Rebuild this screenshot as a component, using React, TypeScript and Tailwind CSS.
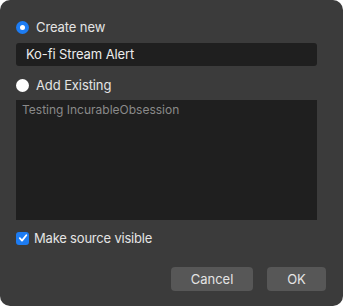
import React from "react";

export default function App() {
  const font = { fontFamily: "Inter, 'Noto Sans', sans-serif" };
  return (
    <div className="w-[343px] h-[306px] bg-white" style={font}>
      <div className="w-full h-full rounded-[10px] bg-[#3b3b3b] px-4 pt-5 flex flex-col">
        <div className="flex items-center h-[14px] gap-[7px]">
          <div className="w-[13px] h-[13px] rounded-full bg-[#1d7cf2] flex items-center justify-center">
            <div className="w-[5px] h-[5px] rounded-full bg-white" />
          </div>
          <span className="text-[13px] text-[#e4e4e4] leading-none tracking-[-0.1px]">Create new</span>
        </div>
        <div className="mt-[9px] h-[23px] w-[301px] rounded-[3px] bg-[#1f1f1f] flex items-center pl-[10px]">
          <span className="text-[13px] text-[#ececec] leading-none tracking-[-0.1px]">Ko-fi Stream Alert</span>
        </div>
        <div className="mt-[12px] flex items-center h-[14px] gap-[7px]">
          <div className="w-[13px] h-[13px] rounded-full bg-white" />
          <span className="text-[13px] text-[#e4e4e4] leading-none tracking-[-0.1px]">Add Existing</span>
        </div>
        <div className="mt-[8px] h-[120px] w-[301px] bg-[#1f1f1f] px-[6px] pt-[4px]">
          <div className="text-[12px] text-[#8a8a8a] leading-none">Testing IncurableObsession</div>
        </div>
        <div className="mt-[11px] flex items-center h-[14px] gap-[5px]">
          <div className="w-[13px] h-[13px] rounded-[3px] bg-[#1d7cf2] flex items-center justify-center">
            <svg width="10" height="10" viewBox="0 0 10 10">
              <path d="M1.8 5.2 L4 7.6 L8.3 2.2" fill="none" stroke="white" strokeWidth="1.8" strokeLinecap="round" strokeLinejoin="round" />
            </svg>
          </div>
          <span className="text-[13px] text-[#e4e4e4] leading-none tracking-[-0.2px]">Make source visible</span>
        </div>
        <div className="mt-[22px] flex justify-end gap-[14px] pr-[1px]">
          <div className="w-[82px] h-[24px] rounded-[4px] bg-[#575757] flex items-center justify-center">
            <span className="text-[13px] text-[#e4e4e4] leading-none">Cancel</span>
          </div>
          <div className="w-[59px] h-[24px] rounded-[4px] bg-[#575757] flex items-center justify-center">
            <span className="text-[13px] text-[#e4e4e4] leading-none">OK</span>
          </div>
        </div>
      </div>
    </div>
  );
}
